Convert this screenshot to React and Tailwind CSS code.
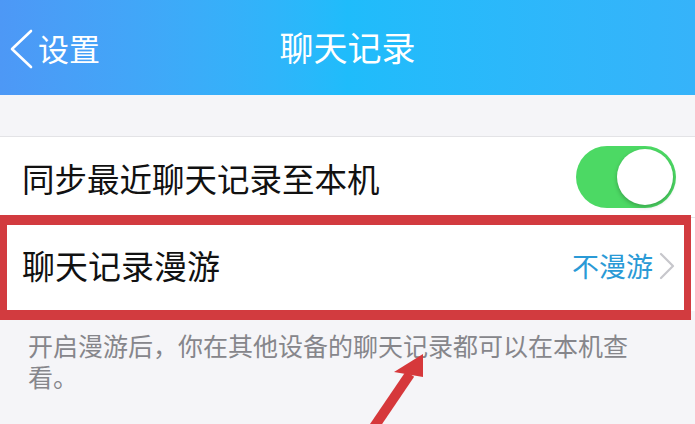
import React from 'react';

const font = { fontFamily: '"Noto Sans CJK SC", "Noto Sans", sans-serif' };

export default function App() {
  return (
    <div className="relative w-[695px] h-[424px] overflow-hidden bg-[#f5f5f8]" style={font}>
      {/* header */}
      <div className="relative h-[95px] flex items-center justify-center bg-gradient-to-r from-[#4d98f6] via-[#1fbcfb] to-[#36b3fa]">
        <div className="absolute left-[8px] top-0 h-full flex items-center gap-[4px]">
          <svg width="26" height="40" viewBox="0 0 26 40" className="mt-[2px]">
            <path d="M23 2 L4 20 L23 38" fill="none" stroke="#fff" strokeWidth="2.6" strokeLinecap="round" strokeLinejoin="round" />
          </svg>
          <span className="text-white text-[31px] leading-none">设置</span>
        </div>
        <span className="text-white text-[34px] leading-none -mt-[2px]">聊天记录</span>
      </div>

      <div className="h-[41px]" />

      {/* rows */}
      <div className="bg-white border-t border-[#e3e3e6]">
        <div className="h-[80px] flex items-center justify-between pl-[22px] pr-[19px]">
          <span className="text-[32.5px] text-[#111] leading-none mt-[3px]">同步最近聊天记录至本机</span>
          <div className="w-[100px] h-[62px] rounded-full bg-[#4cd964] relative">
            <div className="absolute right-[3px] top-[3px] w-[56px] h-[56px] rounded-full bg-white shadow-[0_2px_4px_rgba(0,0,0,0.25)]" />
          </div>
        </div>
        <div className="h-[94px] flex items-center justify-between pl-[22px] pr-[20px] border-t border-[#e3e3e6]">
          <span className="text-[33px] text-[#111] leading-none mt-[2px]">聊天记录漫游</span>
          <div className="flex items-center gap-[6px] mt-[2px]">
            <span className="text-[27px] text-[#2a9ad6] leading-none">不漫游</span>
            <svg width="16" height="28" viewBox="0 0 16 28">
              <path d="M2 2 L14 14 L2 26" fill="none" stroke="#c7c7cc" strokeWidth="2.2" strokeLinecap="round" strokeLinejoin="round" />
            </svg>
          </div>
        </div>
      </div>

      <p className="pl-[28px] pr-[50px] pt-[19px] text-[25px] leading-[31px] text-[#86868b]">
        开启漫游后，你在其他设备的聊天记录都可以在本机查看。
      </p>

      {/* red annotation box */}
      <div className="absolute left-0 top-[215px] w-[691px] h-[105px] border-y-[10px] border-x-[7px] border-[#d23b3f]" />

      {/* red arrow */}
      <svg className="absolute left-0 top-0" width="695" height="424" viewBox="0 0 695 424">
        <line x1="372" y1="430" x2="410" y2="374" stroke="#d6383b" strokeWidth="10" strokeLinecap="butt" />
        <polygon points="423,354 394,372 423,377" fill="#d6383b" />
      </svg>
    </div>
  );
}
